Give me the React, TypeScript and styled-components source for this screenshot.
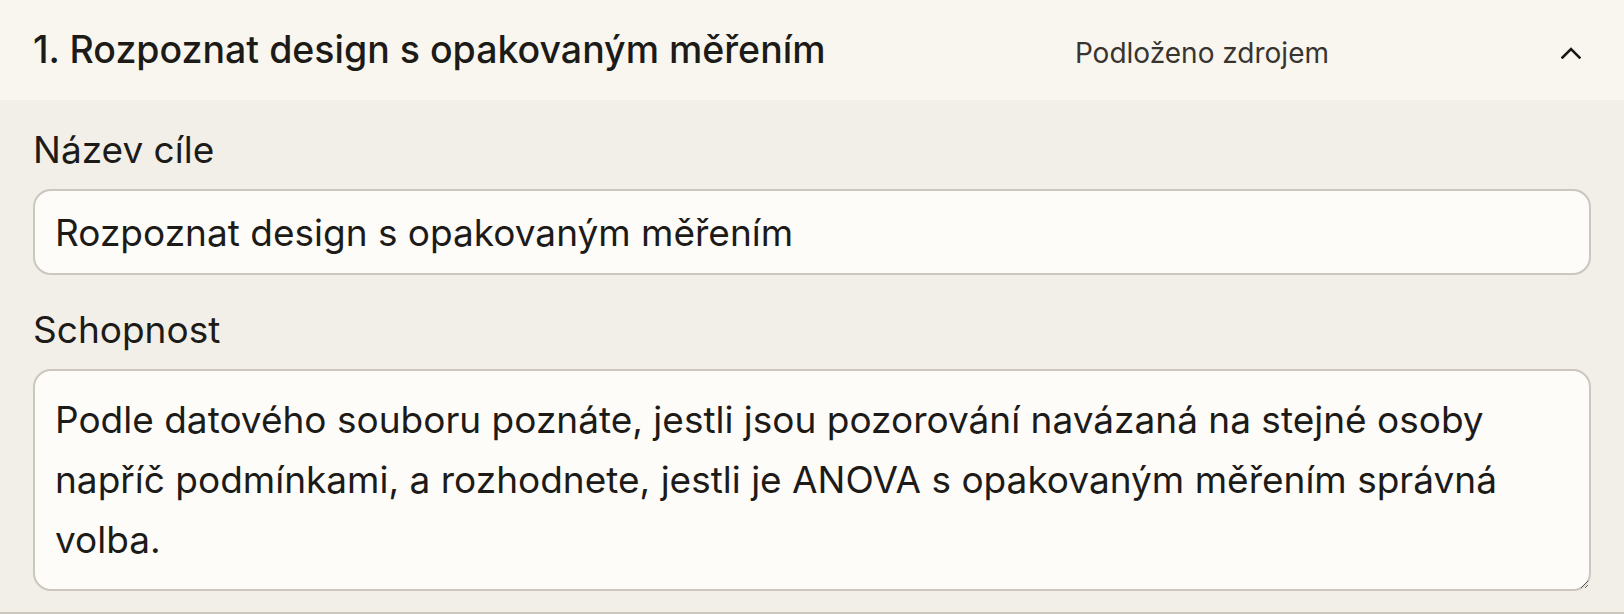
import React, { useState } from "react";
import styled, { createGlobalStyle } from "styled-components";

const GlobalStyle = createGlobalStyle`
  html, body {
    margin: 0;
    padding: 0;
    background: #f2efe9;
  }
  body {
    font-family: "Inter", "Noto Sans", sans-serif;
    color: #1d1b18;
  }
`;

const Item = styled.section`
  border-bottom: 2px solid #cbc6be;
  background: #f2efe9;
`;

const Header = styled.div`
  display: flex;
  align-items: center;
  height: 100px;
  padding: 0 33px;
  background: #f9f6f0;
`;

const Title = styled.h2`
  flex: 1;
  margin: 0;
  font-size: 37.5px;
  font-weight: 500;
  line-height: 44px;
  color: #1d1b18;
`;

const SourceTag = styled.span`
  margin: 5px 222px 0 0;
  font-size: 28px;
  line-height: 34px;
  color: #38342f;
`;

const ToggleButton = styled.button`
  display: flex;
  align-items: center;
  justify-content: center;
  width: 40px;
  height: 40px;
  margin-top: 6px;
  padding: 0;
  border: 0;
  background: transparent;
  color: #1a1815;
  cursor: pointer;
`;

const Body = styled.div`
  display: flex;
  flex-direction: column;
  gap: 33px;
  padding: 28px 33px 21px;
`;

const Field = styled.label`
  display: flex;
  flex-direction: column;
  gap: 17px;
`;

const FieldLabel = styled.span`
  font-size: 37px;
  line-height: 44px;
  color: #1d1b18;
`;

const TextInput = styled.input`
  box-sizing: border-box;
  width: 100%;
  height: 86px;
  padding: 0 20px;
  border: 2px solid #cbc6be;
  border-radius: 18px;
  background: #fdfcf9;
  font-family: inherit;
  font-size: 37px;
  color: #1d1b18;
  outline: none;
`;

const TextArea = styled.textarea`
  box-sizing: border-box;
  width: 100%;
  height: 222px;
  padding: 19px 20px;
  border: 2px solid #cbc6be;
  border-radius: 18px;
  background: #fdfcf9;
  font-family: inherit;
  font-size: 37px;
  line-height: 60px;
  color: #1d1b18;
  outline: none;
  resize: vertical;
`;

const Chevron: React.FC<{ open: boolean }> = ({ open }) => (
  <svg width="20" height="12" viewBox="0 0 20 12" style={{ transform: open ? "none" : "rotate(180deg)" }}>
    <polyline points="1.5,10.5 10,2 18.5,10.5" fill="none" stroke="currentColor" strokeWidth="2.6" strokeLinecap="square" />
  </svg>
);

const App: React.FC = () => {
  const [open, setOpen] = useState(true);
  const [name, setName] = useState("Rozpoznat design s opakovaným měřením");
  const [skill, setSkill] = useState(
    "Podle datového souboru poznáte, jestli jsou pozorování navázaná na stejné osoby napříč podmínkami, a rozhodnete, jestli je ANOVA s opakovaným měřením správná volba."
  );

  return (
    <>
      <GlobalStyle />
      <Item>
        <Header>
          <Title>1. {name}</Title>
          <SourceTag>Podloženo zdrojem</SourceTag>
          <ToggleButton onClick={() => setOpen(!open)} aria-label="Sbalit">
            <Chevron open={open} />
          </ToggleButton>
        </Header>
        {open && (
          <Body>
            <Field>
              <FieldLabel>Název cíle</FieldLabel>
              <TextInput value={name} onChange={(e) => setName(e.target.value)} />
            </Field>
            <Field>
              <FieldLabel>Schopnost</FieldLabel>
              <TextArea value={skill} onChange={(e) => setSkill(e.target.value)} />
            </Field>
          </Body>
        )}
      </Item>
    </>
  );
};

export default App;
